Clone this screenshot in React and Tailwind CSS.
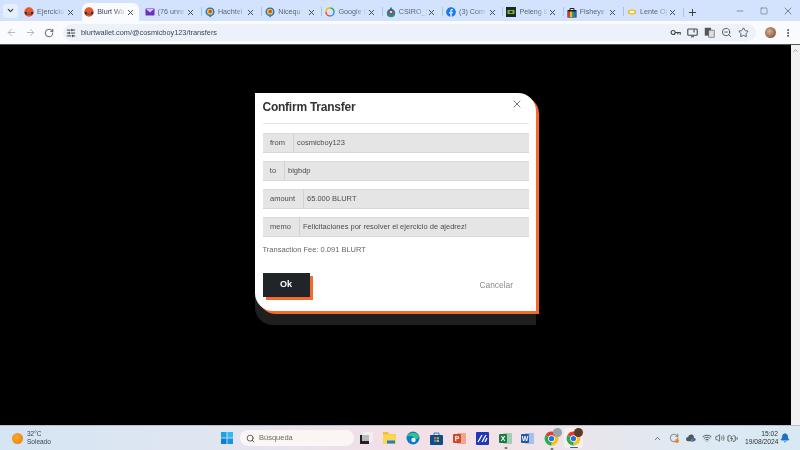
import React from "react";
import { ArrowLeft, ArrowRight, RotateCw, X, Plus, Minus, ChevronDown, ChevronUp, Star, ZoomOut, Search, Bell, Wifi, Volume2, BatteryCharging, EllipsisVertical, SlidersHorizontal, Square } from "lucide-react";
import { FaFacebook } from "react-icons/fa";

const Blurt = () => (
  <svg width="10" height="10" viewBox="0 0 20 20">
    <circle cx="10" cy="10" r="9.5" fill="#e8562a" />
    <path d="M1 12 Q3 8 6 10 L14 10 Q17 8 19 12 Q17 16 14 15 L6 15 Q3 16 1 12Z" fill="#4a2a22" />
    <path d="M6 11h8v2H6z" fill="#c9a596" />
  </svg>
);
const Mail = () => (
  <svg width="10" height="10" viewBox="0 0 20 20">
    <rect x="1" y="3" width="18" height="14" rx="1.5" fill="#6b2fc4" />
    <path d="M2 4 L10 11 L18 4" fill="#d8c8f5" />
  </svg>
);
const Heat = () => (
  <svg width="10" height="11" viewBox="0 0 20 22">
    <path d="M10 1 C16 1 19 5 19 10 C19 15 16 17 13 18 L10 21 L8 18 C4 17 1 14 1 10 C1 5 5 1 10 1Z" fill="#1f6fe0" />
    <circle cx="10" cy="9.5" r="6.2" fill="#f2c91e" />
    <circle cx="10.5" cy="9" r="3.4" fill="#e2402a" />
    <path d="M3 13 Q6 18 12 17 L9 14Z" fill="#27b3a6" />
  </svg>
);
const GoogleDots = () => (
  <svg width="10" height="10" viewBox="0 0 20 20" fill="none" strokeWidth="3">
    <circle cx="10" cy="10" r="8" stroke="#4285f4" strokeDasharray="12 40" />
    <circle cx="10" cy="10" r="8" stroke="#ea4335" strokeDasharray="12 40" strokeDashoffset="-12.5" />
    <circle cx="10" cy="10" r="8" stroke="#fbbc04" strokeDasharray="12 40" strokeDashoffset="-25" />
    <circle cx="10" cy="10" r="8" stroke="#34a853" strokeDasharray="12 40" strokeDashoffset="-37.5" />
  </svg>
);
const Csiro = () => (
  <svg width="10" height="11" viewBox="0 0 20 22">
    <circle cx="10" cy="12" r="8.5" fill="#2d7f9c" />
    <path d="M2 14 Q10 22 18 14 L18 17 Q10 23 2 17Z" fill="#3a9b52" />
    <circle cx="10" cy="10" r="4" fill="#d33" />
    <rect x="8.6" y="1" width="2.8" height="6" fill="#1f5f7c" />
    <circle cx="10" cy="10" r="2" fill="#fff" />
  </svg>
);
const Peleng = () => (
  <svg width="10" height="10" viewBox="0 0 20 20">
    <rect width="20" height="20" fill="#1b2a24" />
    <rect x="3" y="6" width="14" height="8" fill="#7fb23a" />
    <rect x="7" y="8" width="6" height="4" fill="#24351c" />
  </svg>
);
const Fisheye = () => (
  <svg width="10" height="11" viewBox="0 0 20 22">
    <path d="M6 6 V3 H14 V6" fill="none" stroke="#222" strokeWidth="2" />
    <rect x="1" y="6" width="18" height="15" fill="#1a1a2a" />
    <rect x="2" y="9" width="4" height="11" fill="#e0342b" />
    <rect x="6" y="9" width="4" height="11" fill="#f4b81f" />
    <rect x="10" y="9" width="4" height="11" fill="#2c9e4b" />
    <rect x="14" y="9" width="4" height="11" fill="#2a62d0" />
  </svg>
);
const Lente = () => (
  <svg width="11" height="10" viewBox="0 0 22 20" fill="none">
    <ellipse cx="11" cy="10" rx="9.5" ry="6" fill="#e8c23c" />
    <ellipse cx="11" cy="10" rx="5.5" ry="3" fill="#fdf6d8" />
  </svg>
);
const Fb = () => <FaFacebook size={10} color="#1877f2" />;

const tabs = [
  { t: "Ejercicio", I: Blurt },
  { t: "Blurt Wa", I: Blurt, active: true },
  { t: "(76 unre", I: Mail },
  { t: "Hachtel", I: Heat },
  { t: "Nicequ", I: Heat },
  { t: "Google I", I: GoogleDots },
  { t: "CSIRO_S", I: Csiro },
  { t: "(3) Com", I: Fb },
  { t: "Peleng 8", I: Peleng },
  { t: "Fisheye", I: Fisheye },
  { t: "Lente Oj", I: Lente },
];

function Tab({ t, I, active, sep }) {
  return (
    <div className="relative w-[60.3px] h-[18px] shrink-0 flex items-center">
      {active && <div className="absolute left-[2px] right-[2px] top-0 bottom-0 bg-[#f9fbfe] rounded-t-[6px]" />}
      {sep && <div className="absolute left-0 top-[4px] h-[9px] w-px bg-[#a9c4ea]" />}
      <div className="relative flex items-center w-full pl-[4px]">
        <span className="w-[10px] flex justify-center shrink-0"><I /></span>
        <span className={"ml-[3px] w-[28px] whitespace-nowrap text-[7.2px] leading-[10px] [mask-image:linear-gradient(90deg,#000_60%,transparent_105%)] " + (active ? "text-[#3f4450]" : "text-[#5d6472]")}>{t}</span>
        <X size={9} strokeWidth={2.4} className="ml-[0.5px] text-[#3a3f48]" />
      </div>
    </div>
  );
}

const Row = ({ label, value, w }) => (
  <div className="flex h-5 bg-[#e5e5e5] border-t border-[#dcdcdc] border-b border-b-[#d8d8d8] text-[7.5px] leading-none">
    <div className={"flex items-center justify-center border-r border-[#d2d2d2] text-[#4d4d4d] " + w}>{label}</div>
    <div className="flex items-center pl-[3.5px] text-[#4d4d4d] whitespace-nowrap">{value}</div>
  </div>
);

const Win = () => (
  <svg width="12" height="12" viewBox="0 0 12 12">
    <path d="M0 0h5.6v5.6H0z" fill="#1aa3e8" /><path d="M6.4 0H12v5.6H6.4z" fill="#2fb7f0" />
    <path d="M0 6.4h5.6V12H0z" fill="#0f7fd2" /><path d="M6.4 6.4H12V12H6.4z" fill="#1a94e0" />
  </svg>
);
const Snap = () => (
  <svg width="13" height="13" viewBox="0 0 13 13">
    <rect x="3" y="0" width="10" height="10" fill="#f0f0f0" />
    <rect x="0" y="3" width="9" height="9" fill="#222" />
    <rect x="2" y="3" width="7" height="6" fill="#bbb" />
  </svg>
);
const Folder = () => (
  <svg width="13" height="12" viewBox="0 0 13 12">
    <path d="M0 0h5l1 2h7v10H0z" fill="#f5c02e" />
    <rect y="2.5" width="13" height="9.5" fill="#fbd559" />
    <rect x="4" y="8.5" width="8" height="3" fill="#1d7fd0" />
  </svg>
);
const Edge = () => (
  <svg width="14" height="14" viewBox="0 0 14 14">
    <circle cx="7" cy="7" r="6.5" fill="#0d78c8" />
    <path d="M1 6 C2 1 10 0 13 5 C13.5 8 9 9 8 7 C6 4 2 5 1 6Z" fill="#35c28a" />
    <circle cx="7.5" cy="9" r="2.2" fill="#e8f4fb" />
  </svg>
);
const Store = () => (
  <svg width="13" height="13" viewBox="0 0 13 13">
    <path d="M4 3V1h5v2" fill="none" stroke="#2a7fd0" />
    <rect y="3" width="13" height="10" rx="1" fill="#0f4c8a" />
    <rect x="4" y="5" width="2.2" height="2.2" fill="#ee5a2a" /><rect x="6.8" y="5" width="2.2" height="2.2" fill="#7dbb2a" />
    <rect x="4" y="7.8" width="2.2" height="2.2" fill="#22a4ea" /><rect x="6.8" y="7.8" width="2.2" height="2.2" fill="#f6b91f" />
  </svg>
);
const Office = ({ c, l, bg }) => (
  <div className="relative w-[13px] h-[13px]">
    <div className="absolute right-0 top-[1px] w-[9px] h-[11px] rounded-[1px]" style={{ background: bg }} />
    <div className="absolute left-0 top-[2px] w-[8px] h-[9px] rounded-[1px] text-white text-[7px] font-bold leading-[9px] text-center" style={{ background: c }}>{l}</div>
  </div>
);
const Mm = () => (
  <svg width="13" height="13" viewBox="0 0 13 13">
    <rect width="13" height="13" rx="1" fill="#2236b8" />
    <path d="M2 10 L6 3 M6 10 L10 3 M9 10 L11 6" stroke="#fff" strokeWidth="1.3" />
  </svg>
);
const Chrome = () => (
  <svg width="15" height="15" viewBox="0 0 24 24">
    <path d="M2.47 6.5 A11 11 0 0 1 21.53 6.5 L12 12Z" fill="#e33b2e" />
    <path d="M21.53 6.5 A11 11 0 0 1 12 23 L12 12Z" fill="#fbc116" />
    <path d="M12 23 A11 11 0 0 1 2.47 6.5 L12 12Z" fill="#2fa84f" />
    <circle cx="12" cy="12" r="5.4" fill="#fff" />
    <circle cx="12" cy="12" r="4.2" fill="#1a73e8" />
  </svg>
);
const Dot = () => <div className="absolute left-1/2 -translate-x-1/2 -bottom-[4px] w-[3px] h-[1.5px] bg-[#777] rounded" />;

export default function App() {
  return (
    <div className="w-[800px] h-[450px] flex flex-col overflow-hidden bg-black [filter:blur(0.4px)] [font-family:'Liberation_Sans',Arial,sans-serif]">
      {/* tab strip */}
      <div className="h-[21px] bg-[#d3e3fd] flex items-end shrink-0">
        <div className="h-[21px] flex items-center pl-[3px] w-[20px] shrink-0">
          <div className="w-[15px] h-[14px] rounded-[4px] bg-[#e6effc] flex items-center justify-center">
            <ChevronDown size={9} strokeWidth={3} className="text-[#333]" />
          </div>
        </div>
        {tabs.map((x, i) => (
          <Tab key={i} {...x} sep={i > 2} />
        ))}
        <div className="h-[18px] flex items-center">
          <div className="w-px h-[9px] bg-[#a9c4ea] mr-[3px]" />
          <Plus size={11} strokeWidth={2} className="text-[#333]" />
        </div>
        <div className="ml-auto h-[21px] flex items-center text-[#555]">
          <Minus size={10} strokeWidth={1.4} />
          <Square size={8} strokeWidth={1.6} className="ml-[15px]" />
          <X size={12} strokeWidth={1.4} className="ml-[14px] mr-[6px]" />
        </div>
      </div>
      {/* toolbar */}
      <div className="h-[24px] bg-[#f9fbfe] flex items-center shrink-0 pl-[6px] border-b border-[#555]">
        <ArrowLeft size={11} className="text-[#a9adb3]" strokeWidth={1.8} />
        <ArrowRight size={11} className="ml-[8px] text-[#a9adb3]" strokeWidth={1.8} />
        <RotateCw size={10} className="ml-[8px] text-[#444]" strokeWidth={2} />
        <div className="ml-[9px] h-[17px] w-[693px] rounded-full bg-[#edf2fa] flex items-center pl-[3px] pr-[7px]">
          <SlidersHorizontal size={10} className="text-[#333]" strokeWidth={2.2} />
          <span className="ml-[5px] text-[7.35px] text-[#3f4450] whitespace-nowrap">blurtwallet.com/@cosmicboy123/transfers</span>
          <div className="ml-auto flex items-center text-[#444] gap-[6px]">
            <svg width="11" height="11" viewBox="0 0 14 14" fill="none" stroke="#444" strokeWidth="1.4"><circle cx="4" cy="7" r="2.6" /><path d="M6.5 7H13V10M10 7V9.5" /></svg>
            <svg width="11" height="11" viewBox="0 0 14 14" fill="none" stroke="#444" strokeWidth="1.4"><rect x="1" y="2.5" width="12" height="8" rx="1" /><path d="M5 12.5h4M9 3 v4" /></svg>
            <svg width="11" height="11" viewBox="0 0 14 14"><rect x="1" y="1" width="8" height="10" fill="#555" /><rect x="6" y="4" width="7" height="9" fill="#ddd" stroke="#555" strokeWidth=".8" /></svg>
            <ZoomOut size={11} strokeWidth={1.8} />
            <Star size={11} strokeWidth={1.8} />
          </div>
        </div>
        <div className="ml-[9px] w-[11px] h-[11px] rounded-full bg-[radial-gradient(circle_at_40%_40%,#d9b08c,#6b4128)]" />
        <EllipsisVertical size={10} strokeWidth={2.2} className="ml-[7px] text-[#333]" />
      </div>
      {/* page */}
      <div className="flex-1 flex min-h-0">
        <div className="flex-1 bg-black pl-[255px] pt-[48px]">
          <div className="w-[281px] h-[218px] bg-white rounded-tr-[18px] rounded-bl-[18px] shadow-[3px_3px_0_#f26a2e,0_14px_0_#1f1f1f] px-[7.5px] flex flex-col">
            <div className="h-[31px] border-b border-[#e5e5e5] flex items-start justify-between pt-[7px]">
              <h2 className="text-[12px] font-bold leading-[14px] text-[#333] tracking-[-0.02em]">Confirm Transfer</h2>
              <X size={12} strokeWidth={1.8} className="text-[#666] mt-[-2.5px] mr-[5.5px]" />
            </div>
            <div className="mt-[9px] flex flex-col gap-2">
              <Row label="from" value="cosmicboy123" w="w-[31px]" />
              <Row label="to" value="bigbdp" w="w-[22px]" />
              <Row label="amount" value="65.000 BLURT" w="w-[41px]" />
              <Row label="memo" value="Felicitaciones por resolver el ejercicio de ajedrez!" w="w-[37px]" />
            </div>
            <p className="mt-[8px] text-[7.5px] leading-[10px] text-[#666]">Transaction Fee: 0.091 BLURT</p>
            <div className="mt-[18px] flex items-center">
              <div className="w-[47px] h-[24px] bg-[#212529] shadow-[3px_3px_0_#f26a2e] flex items-center justify-center text-white text-[9px] font-bold">Ok</div>
              <span className="ml-[170px] text-[8.4px] text-[#8a8a8a]">Cancelar</span>
            </div>
          </div>
        </div>
        <div className="w-[9px] bg-[#f1f1f1] flex justify-center pt-[2px]">
          <ChevronUp size={7} strokeWidth={3} className="text-[#999]" />
        </div>
      </div>
      {/* taskbar */}
      <div className="h-[25px] shrink-0 border-t border-[#b8c0cc] flex items-center bg-[linear-gradient(90deg,#d5e5f3_0%,#dfe6f1_25%,#f3dfe6_50%,#f3e2e6_62%,#dbeaf4_90%,#d8e9f4_100%)]">
        <div className="w-[221px] flex items-center pl-[12px]">
          <div className="w-[11px] h-[11px] rounded-full bg-[radial-gradient(circle_at_40%_40%,#f9a825,#ee7a12)]" />
          <div className="ml-[4px] text-[6.5px] leading-[8px] text-[#3b4350]">
            <div>32°C</div>
            <div>Soleado</div>
          </div>
        </div>
        <Win />
        <div className="ml-[7px] w-[114px] h-[16px] rounded-full bg-[#fbf5f3] flex items-center pl-[6px]">
          <Search size={9} strokeWidth={2} className="text-[#333]" />
          <span className="ml-[4px] text-[7.5px] text-[#6a6a6a]">Búsqueda</span>
        </div>
        <div className="ml-[6px] flex items-center gap-[10px]">
          <Snap />
          <Folder />
          <Edge />
          <Store />
          <Office c="#d2472a" l="P" bg="#f2a48e" />
          <Mm />
          <div className="relative"><Office c="#1d7a45" l="X" bg="#9fd0b2" /><Dot /></div>
          <div className="relative -ml-[1px]"><Office c="#2458a8" l="W" bg="#a7c2e8" /></div>
          <div className="relative"><Chrome /><div className="absolute -right-[3px] -top-[3px] w-[9px] h-[9px] rounded-full bg-[#9aa3ab]" /><Dot /></div>
          <div className="relative -ml-[5px] w-[19px] h-[20px] bg-[#f6eef0] flex items-center justify-center rounded-[2px]">
            <Chrome />
            <div className="absolute right-0 top-0 w-[9px] h-[9px] rounded-full bg-[#5a3b2a]" />
            <div className="absolute left-1/2 -translate-x-1/2 bottom-0 w-[8px] h-[1.5px] bg-[#1f6fc4] rounded" />
          </div>
        </div>
        <div className="ml-auto flex items-center text-[#444]">
          <ChevronUp size={9} strokeWidth={2} />
          <div className="relative ml-[7px]">
            <RotateCw size={10} strokeWidth={1.8} className="text-[#666]" />
            <div className="absolute right-0 bottom-0 w-[4px] h-[4px] rounded-full bg-[#f0851a]" />
          </div>
          <svg width="10" height="9" viewBox="0 0 14 12" className="ml-[7px]"><path d="M3 10a3 3 0 0 1 0-6 4 4 0 0 1 8 1 2.5 2.5 0 0 1 0 5z" fill="#555" /><circle cx="9" cy="8" r="2.5" fill="#3a7fd0" /></svg>
          <Wifi size={10} strokeWidth={2} className="ml-[6px]" />
          <Volume2 size={10} strokeWidth={1.8} className="ml-[3px]" />
          <BatteryCharging size={11} strokeWidth={1.8} className="ml-[1.5px]" />
          <div className="ml-[7.5px] w-[33px] text-right text-[6.7px] leading-[8.5px] text-[#333] whitespace-nowrap">
            <div>15:02</div>
            <div>19/08/2024</div>
          </div>
          <Bell size={10} strokeWidth={2} fill="#1f6fc4" className="ml-[2px] mr-[10px] text-[#1f6fc4]" />
        </div>
      </div>
    </div>
  );
}
